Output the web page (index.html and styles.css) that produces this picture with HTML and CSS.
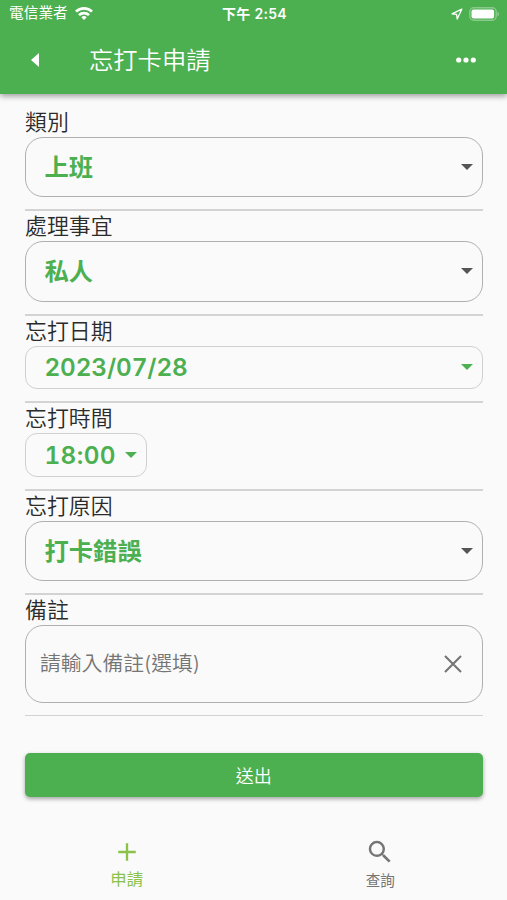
FILE: index.html
```
<!DOCTYPE html>
<html lang="zh-Hant">
<head>
    <meta charset="UTF-8">
    <meta name="viewport" content="width=device-width, initial-scale=1.0">
    <title>忘打卡申請</title>
    <link rel="stylesheet" href="styles.css">
</head>
<body>
    <header class="header">
        <div class="status-bar">
            <div class="carrier">
                <span>電信業者</span>
                <svg class="wifi" viewBox="0 0 18 13" fill="none" stroke="#fff" stroke-width="2.7">
                    <path d="M1 4.6a11.5 11.5 0 0 1 16 0"/>
                    <path d="M4 8.1a7.2 7.2 0 0 1 10 0"/>
                    <path d="M9 13L6.3 10.3a3.9 3.9 0 0 1 5.4 0z" fill="#fff" stroke="none"/>
                </svg>
            </div>
            <div class="clock">下午 2:54</div>
            <div class="status-icons">
                <svg class="location" viewBox="0 0 12 12" fill="none" stroke="#fff" stroke-width="1.3" stroke-linejoin="round">
                    <path d="M10.8 1.2L1 5.8l4.6.6.6 4.6z"/>
                </svg>
                <svg class="battery" viewBox="0 0 31 14">
                    <rect x=".8" y=".8" width="26.4" height="12.4" rx="4" fill="none" stroke="#fff" stroke-width="1.4" stroke-opacity=".35"/>
                    <rect x="2.5" y="2.5" width="22.6" height="9" rx="2" fill="#fff"/>
                    <path d="M28.5 4.7v4.6a2.5 2.5 0 0 0 0-4.6z" fill="#fff" fill-opacity=".4"/>
                </svg>
            </div>
        </div>
        <div class="toolbar">
            <svg class="back" viewBox="0 0 8 14"><path d="M8 0v14L0 7z" fill="#fff"/></svg>
            <h1>忘打卡申請</h1>
            <svg class="more" viewBox="0 0 20 6" fill="#fff">
                <circle cx="2.7" cy="3" r="2.6"/><circle cx="10" cy="3" r="2.6"/><circle cx="17.3" cy="3" r="2.6"/>
            </svg>
        </div>
    </header>

    <main class="form">
        <div class="field">
            <label>類別</label>
            <div class="select"><span>上班</span><i class="arrow"></i></div>
        </div>
        <div class="field">
            <label>處理事宜</label>
            <div class="select"><span>私人</span><i class="arrow"></i></div>
        </div>
        <div class="field">
            <label>忘打日期</label>
            <div class="select picker"><span>2023/07/28</span><i class="arrow"></i></div>
        </div>
        <div class="field">
            <label>忘打時間</label>
            <div class="select picker time"><span>18:00</span><i class="arrow"></i></div>
        </div>
        <div class="field">
            <label>忘打原因</label>
            <div class="select"><span>打卡錯誤</span><i class="arrow"></i></div>
        </div>
        <div class="field">
            <label>備註</label>
            <div class="select note">
                <span>請輸入備註(選填)</span>
                <svg class="clear" viewBox="0 0 18 18" stroke="#757575" stroke-width="2.1"><path d="M1 1l16 16M17 1L1 17"/></svg>
            </div>
        </div>
        <button class="submit">送出</button>
    </main>

    <nav class="navbar">
        <a class="active">
            <svg viewBox="0 0 24 24" stroke="#8bc34a" stroke-width="1.9"><path d="M12 5v14M5 12h14"/></svg>
            <span>申請</span>
        </a>
        <a>
            <svg viewBox="0 0 24 24" fill="#757575"><path d="M15.5 14h-.79l-.28-.27A6.47 6.47 0 0 0 16 9.5 6.5 6.5 0 1 0 9.5 16c1.61 0 3.09-.59 4.23-1.57l.27.28v.79l5 4.99L20.49 19l-4.99-5zm-6 0C7.01 14 5 11.99 5 9.5S7.01 5 9.5 5 14 7.01 14 9.5 11.99 14 9.5 14z"/></svg>
            <span>查詢</span>
        </a>
    </nav>
</body>
</html>
```

FILE: styles.css
```
* {
    box-sizing: border-box;
}
body {
    margin: 0;
    height: 900px;
    display: flex;
    flex-direction: column;
    overflow: hidden;
    background-color: #fafafa;
    font-family: Inter, "Noto Sans CJK TC", sans-serif;
    color: #2b2b2b;
}
.header {
    height: 94px;
    flex-shrink: 0;
    background-color: #4caf50;
    color: white;
    box-shadow: 0 2px 6px rgba(0, 0, 0, 0.4);
}
.status-bar {
    height: 27px;
    padding: 0 7px 0 9px;
    display: grid;
    grid-template-columns: 1fr auto 1fr;
    align-items: center;
    font-size: 14.7px;
    line-height: 27px;
}
.carrier {
    display: flex;
    align-items: center;
    gap: 7px;
}
.wifi {
    width: 18px;
    height: 13px;
}
.clock {
    font-weight: 600;
    font-size: 14px;
    letter-spacing: 0.3px;
}
.status-icons {
    display: flex;
    justify-content: flex-end;
    align-items: center;
    gap: 6px;
}
.location {
    width: 12px;
    height: 12px;
}
.battery {
    width: 31px;
    height: 14px;
}
.toolbar {
    height: 66px;
    padding: 0 31.5px 0 31px;
    display: flex;
    align-items: center;
}
.back {
    width: 8px;
    height: 14px;
}
.toolbar h1 {
    flex: 1;
    margin: 0 0 0 50px;
    font-size: 24.3px;
    font-weight: 350;
    line-height: 36px;
}
.more {
    width: 20px;
    height: 6px;
}

/* Formulario */
.form {
    padding: 12.5px 24.5px 0 25px;
}
.field {
    padding-bottom: 12px;
    border-bottom: 2px solid #d3d3d3;
}
.field:nth-child(6) {
    border-bottom-width: 1px;
}
.field label {
    display: block;
    height: 30px;
    line-height: 30px;
    font-size: 21.9px;
    font-weight: 350;
}
.select {
    height: 60.6px;
    padding: 0 9px 0 18.5px;
    display: flex;
    align-items: center;
    justify-content: space-between;
    border: 1px solid #b0b0b0;
    border-radius: 18px;
    color: #4caf50;
    font-size: 24.3px;
    font-weight: 700;
    line-height: 36px;
}
.arrow {
    border: 6px solid transparent;
    border-top-color: #555;
    border-bottom: 0;
}
.picker {
    height: 43.6px;
    border-color: #d0d0d0;
    border-radius: 12px;
    font-weight: 600;
    font-variant-numeric: tabular-nums;
    letter-spacing: -0.1px;
}
.picker .arrow {
    border-top-color: #4caf50;
}
.time {
    width: 122px;
    letter-spacing: 0.4px;
}
.note {
    height: 78px;
    padding: 0 20px 0 14px;
    color: #757575;
    font-size: 20.8px;
    font-weight: 350;
}
.clear {
    width: 18px;
    height: 18px;
}
.submit {
    display: block;
    width: 100%;
    height: 44px;
    margin-top: 37px;
    padding: 0;
    border: 0;
    border-radius: 5px;
    background-color: #4caf50;
    color: white;
    font-family: inherit;
    font-size: 18px;
    font-weight: 350;
    box-shadow: 0 2px 4px rgba(0, 0, 0, 0.35);
}

/* Menu inferior */
.navbar {
    margin-top: auto;
    height: 63px;
    display: flex;
}
.navbar a {
    flex: 1;
    display: flex;
    flex-direction: column;
    align-items: center;
    color: #757575;
    font-size: 14.6px;
    line-height: 28px;
}
.navbar svg {
    width: 30px;
    height: 30px;
}
.navbar .active {
    color: #8bc34a;
    font-size: 16.4px;
    line-height: 24px;
}
```
